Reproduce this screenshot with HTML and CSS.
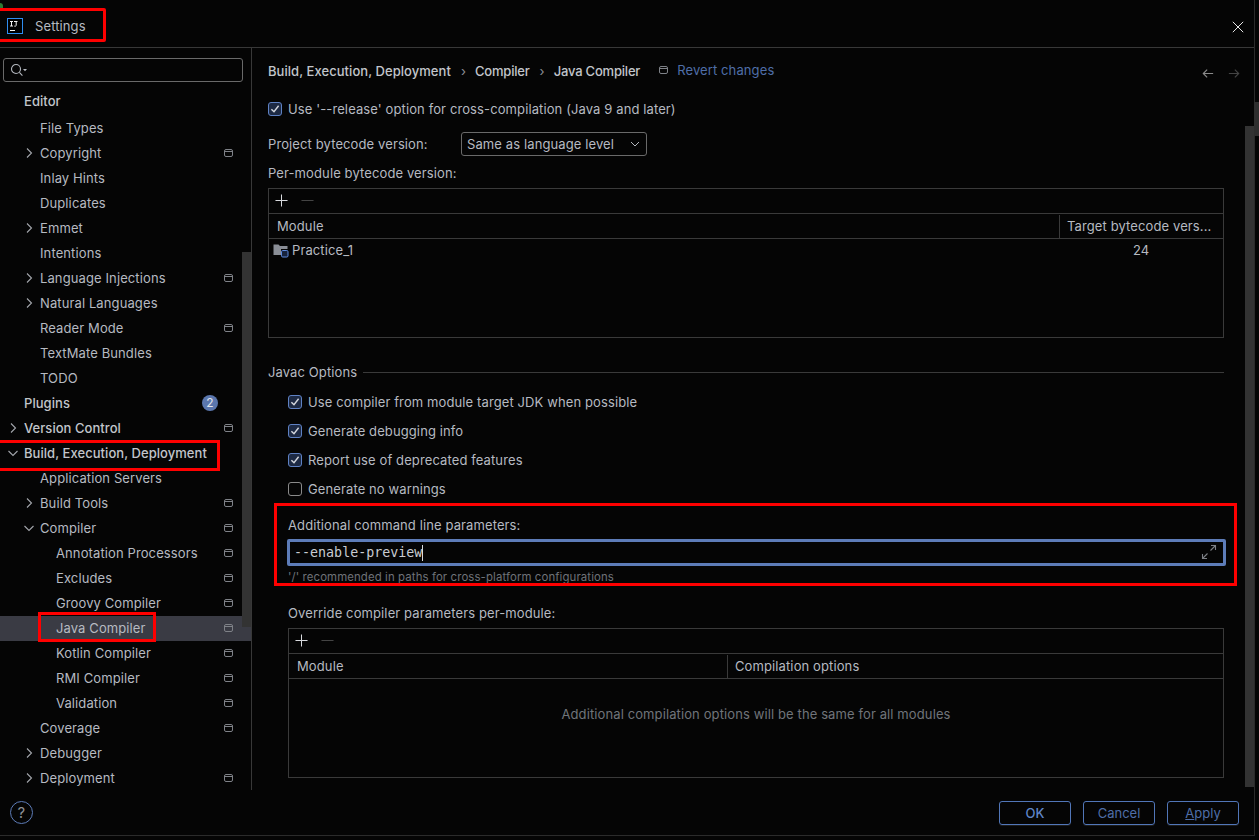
FILE: index.html
```html
<!DOCTYPE html>
<html lang="en">
<head>
<meta charset="utf-8">
<title>Settings</title>
<link rel="stylesheet" href="styles.css">
</head>
<body>
<svg class="sprites" width="0" height="0" aria-hidden="true">
  <symbol id="pin" viewBox="0 0 9 8"><rect x=".5" y=".5" width="8" height="7" rx="1.5" fill="none" stroke="currentColor"/><path d="M1 2.5h7" stroke="currentColor"/></symbol>
  <symbol id="right" viewBox="0 0 16 16"><path d="M6 3.5 10.5 8 6 12.5" fill="none" stroke="currentColor" stroke-width="1.1"/></symbol>
  <symbol id="down" viewBox="0 0 16 16"><path d="M3.5 6 8 10.5 12.5 6" fill="none" stroke="currentColor" stroke-width="1.1"/></symbol>
  <symbol id="check" viewBox="0 0 14 14"><rect x=".5" y=".5" width="13" height="13" rx="2.5" fill="#1d2a44" stroke="#5f82c4"/><path d="M3.4 7.2 6 9.8l4.6-6" fill="none" stroke="#d5d8de" stroke-width="1.4"/></symbol>
  <symbol id="plus" viewBox="0 0 14 14"><path d="M7 .5v13M.5 7h13" stroke="currentColor" stroke-width="1.1"/></symbol>
  <symbol id="minus" viewBox="0 0 14 14"><path d="M.5 7h13" stroke="currentColor" stroke-width="1"/></symbol>
</svg>

<div class="window">
  <span class="corner-dot"></span>
  <span class="edge-thumb"></span>

  <header class="titlebar">
    <svg class="app-icon" width="16" height="16" viewBox="0 0 16 16"><rect x=".5" y=".5" width="15" height="15" fill="#000" stroke="#2f8df0"/><path d="M3 3.5h3M4.5 3.5v4.5M3 8h3M7 3.5h3.5M9.2 3.5v3.8c0 .8-.6 1-1.9.8M3 12.5h5" fill="none" stroke="#f2f2f2" stroke-width="1"/></svg>
    <span class="title">Settings</span>
    <svg class="close" width="12" height="12" viewBox="0 0 12 12"><path d="M.8.8l10.4 10.4M11.2.8.8 11.2" stroke="#e6e6e6" stroke-width="1"/></svg>
  </header>

  <div class="body">
    <aside class="sidebar">
      <div class="search">
        <svg width="20" height="14" viewBox="0 0 20 14"><circle cx="6" cy="6" r="4.5" fill="none" stroke="#b4b8bf" stroke-width="1.1"/><path d="M9.4 9.4 12.4 12.6" stroke="#b4b8bf" stroke-width="1.1"/><path d="M13 6h4l-2 2.2z" fill="#b4b8bf"/></svg>
      </div>
      <nav class="tree">
        <div class="row l0 strong first"><span class="nochev"></span>Editor</div>
        <div class="row l1"><span class="nochev"></span>File Types</div>
        <div class="row l1"><svg class="chev"><use href="#right"/></svg>Copyright<svg class="pin"><use href="#pin"/></svg></div>
        <div class="row l1"><span class="nochev"></span>Inlay Hints</div>
        <div class="row l1"><span class="nochev"></span>Duplicates</div>
        <div class="row l1"><svg class="chev"><use href="#right"/></svg>Emmet</div>
        <div class="row l1"><span class="nochev"></span>Intentions</div>
        <div class="row l1"><svg class="chev"><use href="#right"/></svg>Language Injections<svg class="pin"><use href="#pin"/></svg></div>
        <div class="row l1"><svg class="chev"><use href="#right"/></svg>Natural Languages</div>
        <div class="row l1"><span class="nochev"></span>Reader Mode<svg class="pin"><use href="#pin"/></svg></div>
        <div class="row l1"><span class="nochev"></span>TextMate Bundles</div>
        <div class="row l1"><span class="nochev"></span>TODO</div>
        <div class="row l0 strong"><span class="nochev"></span>Plugins<span class="badge">2</span></div>
        <div class="row l0 strong"><svg class="chev"><use href="#right"/></svg>Version Control<svg class="pin"><use href="#pin"/></svg></div>
        <div class="row l0 strong"><svg class="chev"><use href="#down"/></svg>Build, Execution, Deployment</div>
        <div class="row l1"><span class="nochev"></span>Application Servers</div>
        <div class="row l1"><svg class="chev"><use href="#right"/></svg>Build Tools<svg class="pin"><use href="#pin"/></svg></div>
        <div class="row l1"><svg class="chev"><use href="#down"/></svg>Compiler<svg class="pin"><use href="#pin"/></svg></div>
        <div class="row l2"><span class="nochev"></span>Annotation Processors<svg class="pin"><use href="#pin"/></svg></div>
        <div class="row l2"><span class="nochev"></span>Excludes<svg class="pin"><use href="#pin"/></svg></div>
        <div class="row l2"><span class="nochev"></span>Groovy Compiler<svg class="pin"><use href="#pin"/></svg></div>
        <div class="row l2 selected"><span class="nochev"></span>Java Compiler<svg class="pin"><use href="#pin"/></svg></div>
        <div class="row l2"><span class="nochev"></span>Kotlin Compiler<svg class="pin"><use href="#pin"/></svg></div>
        <div class="row l2"><span class="nochev"></span>RMI Compiler<svg class="pin"><use href="#pin"/></svg></div>
        <div class="row l2"><span class="nochev"></span>Validation<svg class="pin"><use href="#pin"/></svg></div>
        <div class="row l1"><span class="nochev"></span>Coverage<svg class="pin"><use href="#pin"/></svg></div>
        <div class="row l1"><svg class="chev"><use href="#right"/></svg>Debugger</div>
        <div class="row l1"><svg class="chev"><use href="#right"/></svg>Deployment<svg class="pin"><use href="#pin"/></svg></div>
      </nav>
      <span class="scroll side-scroll"></span>
    </aside>

    <main class="content">
      <div class="crumbs">
        <span class="crumb">Build, Execution, Deployment</span><span class="sep">›</span>
        <span class="crumb tight">Compiler</span><span class="sep">›</span>
        <span class="crumb tight">Java Compiler</span>
        <svg class="pin crumb-pin"><use href="#pin"/></svg>
        <span class="revert">Revert changes</span>
        <span class="nav-arrows">
          <svg width="12" height="11" viewBox="0 0 14 12"><path d="M13 6H1.5M6 1.5 1.5 6 6 10.5" fill="none" stroke="#8a8a8a" stroke-width="1.3"/></svg>
          <svg width="12" height="11" viewBox="0 0 14 12"><path d="M1 6h11.5M8 1.5 12.5 6 8 10.5" fill="none" stroke="#444" stroke-width="1.3"/></svg>
        </span>
      </div>

      <label class="check top-check"><svg class="box"><use href="#check"/></svg>Use '--release' option for cross-compilation (Java 9 and later)</label>

      <div class="bytecode">
        <span class="bytecode-label">Project bytecode version:</span>
        <span class="select">Same as language level<svg class="select-arrow" width="10" height="6" viewBox="0 0 10 6"><path d="M1 1l4 4 4-4" fill="none" stroke="#b4b8bf"/></svg></span>
      </div>
      <div class="per-module">Per-module bytecode version:</div>

      <section class="table table-a">
        <div class="tools"><svg class="plus"><use href="#plus"/></svg><svg class="minus"><use href="#minus"/></svg></div>
        <div class="thead"><span class="th-main">Module</span><span class="th-side">Target bytecode vers...</span></div>
        <div class="tbody-row">
          <span class="module">
            <svg width="16" height="16" viewBox="0 0 16 16"><path d="M.5 2.5h5l1.5 1.5h7.5V7H8v6H.5z" fill="#8a8e96"/><rect x="8.5" y="8.5" width="6.5" height="6.5" rx="1.2" fill="#17233c" stroke="#5f8be0"/></svg>
            Practice_1
          </span>
          <span class="version">24</span>
        </div>
      </section>

      <div class="group-title"><span>Javac Options</span><i></i></div>

      <div class="options">
        <label class="check"><svg class="box"><use href="#check"/></svg>Use compiler from module target JDK when possible</label>
        <label class="check"><svg class="box"><use href="#check"/></svg>Generate debugging info</label>
        <label class="check"><svg class="box"><use href="#check"/></svg>Report use of deprecated features</label>
        <label class="check"><span class="box empty"></span>Generate no warnings</label>
      </div>

      <div class="params">
        <div class="params-label">Additional command line parameters:</div>
        <div class="field"><span class="mono">--enable-preview</span><span class="caret"></span>
          <svg class="expand" width="16" height="16" viewBox="0 0 16 16"><path d="M9.5 6.5 14.5 1.5M10 1.5h4.5V6M6.5 9.5l-5 5M1.5 10v4.5H6" fill="none" stroke="#7c7f85" stroke-width="1.1"/></svg>
        </div>
        <div class="hint">'/' recommended in paths for cross-platform configurations</div>
      </div>

      <div class="override-label">Override compiler parameters per-module:</div>
      <section class="table table-b">
        <div class="tools"><svg class="plus"><use href="#plus"/></svg><svg class="minus"><use href="#minus"/></svg></div>
        <div class="thead"><span class="th-half">Module</span><span class="th-rest">Compilation options</span></div>
        <div class="empty-text">Additional compilation options will be the same for all modules</div>
      </section>
      <span class="scroll main-scroll"></span>
    </main>
  </div>

  <footer class="footer">
    <span class="help">?</span>
    <span class="buttons">
      <button class="btn ok">OK</button>
      <button class="btn">Cancel</button>
      <button class="btn"><u>A</u>pply</button>
    </span>
  </footer>

  <span class="mark mark-title"></span>
  <span class="mark mark-build"></span>
  <span class="mark mark-java"></span>
  <span class="mark mark-params"></span>
</div>
</body>
</html>
```
FILE: styles.css
```css
* { box-sizing: border-box; }
html, body { margin: 0; height: 100%; background: #050505; overflow: hidden; }
body { font: 13px/16px Inter, "Liberation Sans", sans-serif; letter-spacing: .11px; color: #b6bac1; }
.sprites { position: absolute; }

.window {
  position: relative;
  width: 1255px;
  height: 836px;
  display: flex;
  flex-direction: column;
  border-right: 1px solid #2b2b2b;
  border-bottom: 1px solid #2b2b2b;
}

.titlebar {
  flex: 0 0 48px;
  display: flex;
  align-items: center;
  padding: 0 11px 0 7px;
  border-bottom: 1px solid #383838;
}
.app-icon { margin-right: 12px; position: relative; top: 2px; }
.title { position: relative; top: 2px; }
.close { margin-left: auto; margin-right: -1px; position: relative; top: 3px; }

.body { flex: 1; display: flex; min-height: 0; }

.sidebar {
  position: relative;
  flex: 0 0 252px;
  border-right: 1px solid #383838;
  padding-top: 10px;
  overflow: hidden;
}
.search {
  width: 240px;
  height: 24px;
  margin-left: 3px;
  border: 1px solid #6a6a6a;
  border-radius: 3px;
  padding: 4px 0 0 6px;
  display: flex;
}
.tree { margin-top: 5px; }
.row {
  height: 25px;
  padding-bottom: 2px;
  display: flex;
  align-items: center;
  white-space: nowrap;
}
.row.first { height: 29px; }
.l0 { padding-left: 5px; }
.l1 { padding-left: 21px; }
.l2 { padding-left: 37px; }
.strong { font-weight: 500; letter-spacing: .05px; color: #c2c5cb; }
.selected { background: #3a3b44; }
.chev { width: 16px; height: 16px; margin-right: 3px; flex: none; color: #a3a6ac; }
.nochev { width: 16px; margin-right: 3px; flex: none; }
.pin { width: 9px; height: 8px; margin-left: auto; margin-right: 18px; color: #7f8288; flex: none; }
.badge {
  margin-left: auto;
  margin-right: 33px;
  width: 16px;
  height: 16px;
  border-radius: 50%;
  background: #5b77ae;
  color: #e3e6ec;
  font-size: 12px;
  font-weight: 400;
  line-height: 16px;
  text-align: center;
}

.scroll { position: absolute; background: #333; width: 9px; }
.side-scroll { left: 242px; top: 204px; height: 375px; }
.main-scroll { right: 0; top: 78px; height: 661px; }

.content { position: relative; flex: 1; padding: 0 0 0 16px; overflow: hidden; min-width: 0; }

.crumbs { display: flex; align-items: center; height: 16px; margin-top: 15px; width: 970px; }
.crumb { font-weight: 500; letter-spacing: .05px; color: #c2c5cb; }
.crumb.tight { letter-spacing: -.2px; }
.sep { margin: 0 9px 0 10px; color: #8d9096; }
.crumb-pin { margin: 0 0 0 19px; position: relative; top: -1px; }
.revert { margin-left: 9px; color: #4f6ea8; position: relative; top: -1px; }
.nav-arrows { margin-left: auto; display: flex; gap: 14px; margin-right: -2px; position: relative; top: 2px; }

.check { display: flex; align-items: center; height: 16px; white-space: nowrap; }
.box { width: 14px; height: 14px; margin-right: 6px; flex: none; }
.box.empty { border: 1px solid #8a8a8a; border-radius: 3px; }
.top-check { margin-top: 22px; }

.bytecode { display: flex; align-items: center; margin-top: 15px; height: 24px; }
.bytecode-label { width: 193px; }
.select {
  width: 186px;
  height: 24px;
  border: 1px solid #6a6a6a;
  border-radius: 3px;
  display: flex;
  align-items: center;
  padding-left: 5px;
}
.select-arrow { margin-left: auto; margin-right: 6px; }
.per-module { margin-top: 9px; }

.table { border: 1px solid #3a3a3a; width: 956px; }
.tools { height: 25px; padding-bottom: 2px; border-bottom: 1px solid #3a3a3a; display: flex; align-items: center; padding-left: 6px; gap: 13px; }
.plus { width: 13px; height: 13px; color: #d8dade; flex: none; }
.minus { width: 13px; height: 13px; color: #4a4a4a; flex: none; }
.thead { height: 25px; border-bottom: 1px solid #3a3a3a; display: flex; align-items: center; }

.table-a { height: 150px; margin-top: 7px; }
.th-main { flex: 1; padding-left: 8px; height: 23px; line-height: 22px; border-right: 1px solid #3a3a3a; }
.th-side { width: 163px; padding-left: 7px; white-space: nowrap; }
.tbody-row { display: flex; height: 22px; align-items: center; padding-left: 4px; }
.module { flex: 1; display: flex; align-items: center; gap: 3px; }
.version { width: 90px; }

.group-title { display: flex; align-items: center; gap: 6px; margin-top: 26px; }
.group-title i { flex: none; width: 861px; height: 1px; background: #3a3a3a; }

.options { margin: 14px 0 0 20px; display: flex; flex-direction: column; gap: 13px; }

.params-label { margin: 0 0 0 20px; padding-top: 20px; }
.field {
  position: relative;
  margin: 6px 0 0 19px;
  width: 939px;
  height: 27px;
  border: 3px solid #5d7cb8;
  border-radius: 2px;
  display: flex;
  align-items: center;
  padding-left: 4px;
}
.mono { font: 13.33px/16px "DejaVu Sans Mono", "Liberation Mono", monospace; letter-spacing: 0; color: #c9ccd2; }
.caret { width: 1px; height: 16px; background: #d8dade; }
.expand { position: absolute; right: 6px; top: 2px; }
.hint { margin: 4px 0 0 20px; font-size: 11.4px; line-height: 14px; color: #6f7278; }

.override-label { margin: 21px 0 0 20px; }
.table-b { height: 150px; margin: 7px 0 0 20px; width: 936px; }
.th-half { width: 439px; padding-left: 8px; height: 23px; line-height: 22px; border-right: 1px solid #3a3a3a; }
.th-rest { padding-left: 7px; }
.empty-text { text-align: center; margin-top: 27px; color: #70747a; }

.footer { flex: 0 0 45px; display: flex; align-items: flex-start; padding: 11px 15px 0 10px; }
.help {
  width: 23px;
  height: 23px;
  border: 1px solid #5d7cb8;
  border-radius: 50%;
  text-align: center;
  line-height: 21px;
  font-size: 15px;
  color: #8d9096;
}
.buttons { margin-left: auto; display: flex; gap: 12px; }
.btn {
  width: 72px;
  height: 24px;
  background: transparent;
  border: 1px solid #5176b8;
  border-radius: 3px;
  color: #4f6ea8;
  font: 13px/16px Inter, "Liberation Sans", sans-serif;
  padding: 0;
  box-shadow: 0 1px 0 #1c1c1c;
}
.ok { font-weight: 500; color: #5f84c8; }

.mark { position: absolute; border: 3px solid #f00; pointer-events: none; }
.mark-title { left: -3px; top: 8px; width: 109px; height: 34px; border-radius: 2px; }
.mark-build { left: -3px; top: 440px; width: 223px; height: 31px; }
.mark-java { left: 38px; top: 612px; width: 118px; height: 30px; }
.mark-params { left: 274px; top: 503px; width: 963px; height: 83px; }

.corner-dot { position: absolute; left: 0; top: 3px; width: 3px; height: 5px; background: #2c7a34; border-radius: 0 3px 0 0; }
.edge-thumb { position: absolute; left: 1254px; top: 102px; width: 5px; height: 34px; background: #2e2e2e; }
```
